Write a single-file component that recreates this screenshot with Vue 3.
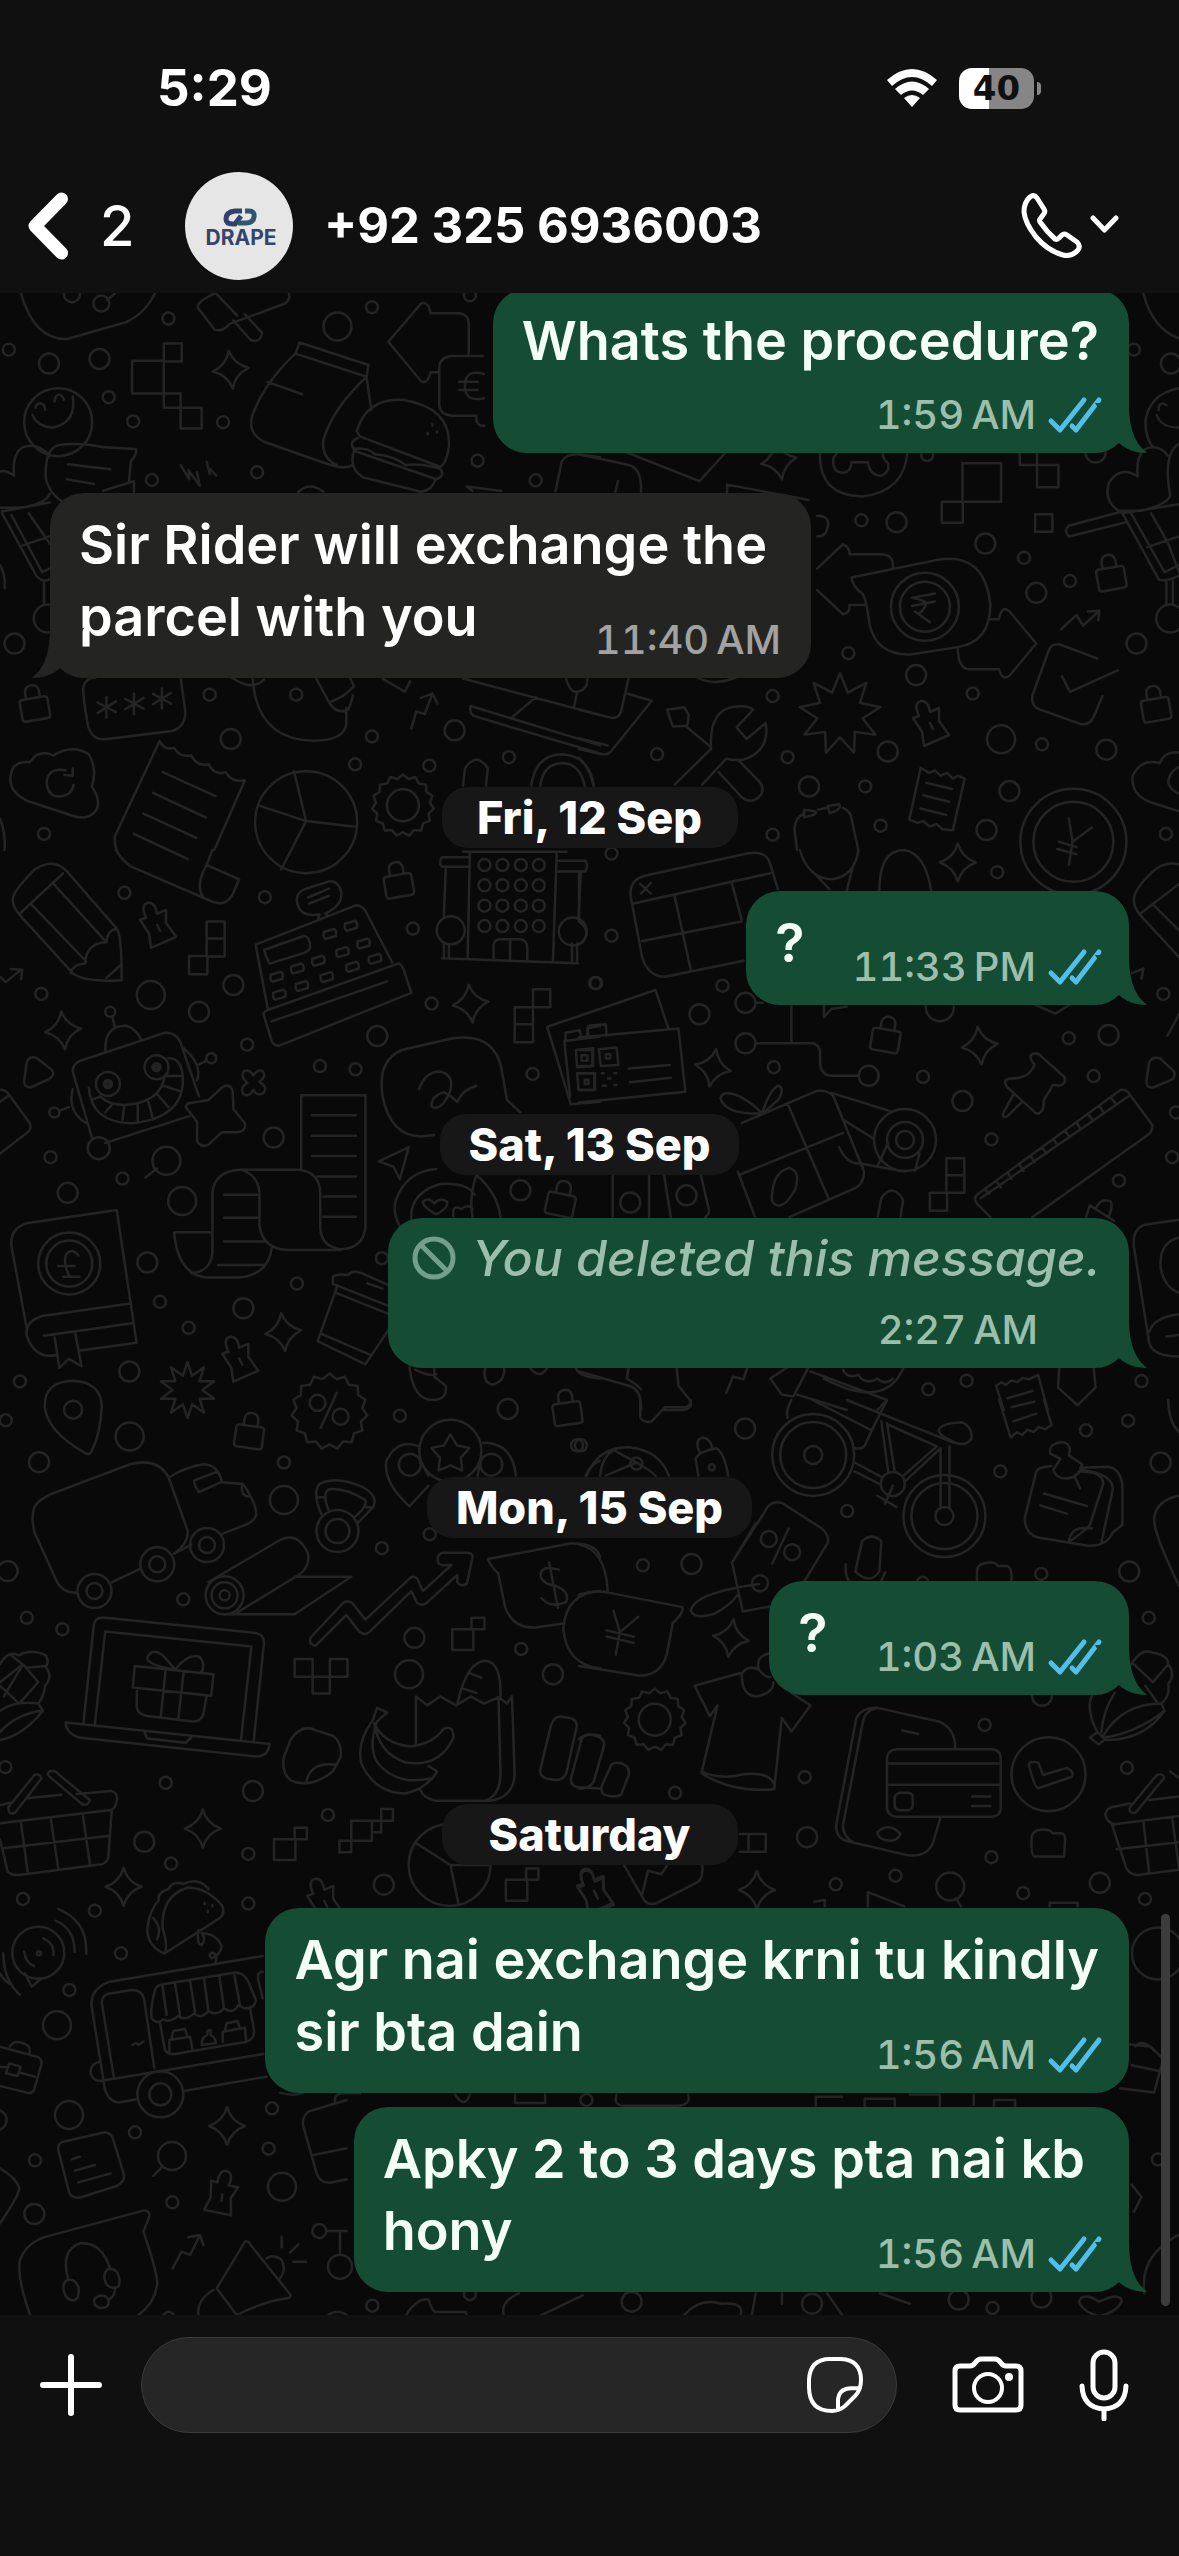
<template>
  <div class="screen">
    <header class="top">
      <div class="status">
        <span class="clock">5:29</span>
        <div class="status__right">
          <svg class="wifi" width="52" height="38" viewBox="0 0 52 38" aria-label="Wi-Fi">
            <path d="M1 11Q26-11 51 11L46 17Q26-1 6 17zM9 20Q26 5 43 20L37 26Q26 17 15 26zM18 29Q26 23 34 29L26 38z" fill="#fff" />
          </svg>
          <div class="battery"><span>40</span></div>
        </div>
      </div>
      <div class="contact">
        <button class="back" aria-label="Back">
          <svg width="40" height="68" viewBox="0 0 40 68">
            <path d="M33.500 7L7 34L33.500 61" fill="none" stroke="#fff" stroke-width="13" stroke-linecap="round" stroke-linejoin="round" />
          </svg>
          <span>2</span>
        </button>
        <svg class="avatar" width="108" height="108" viewBox="0 0 108 108">
          <circle cx="54" cy="54" r="54" fill="#e6e6e6" />
          <g fill="none" stroke-width="5">
            <path d="M57 39H50Q41 40 41 47Q41 52 48 52H50L56 44" stroke="#34406b" />
            <path d="M60 39H64Q70 39 69 45Q68 51 61 51H53" stroke="#2f5670" />
          </g>
          <text x="56" y="73" text-anchor="middle" class="avatar__name">DRAPE</text>
        </svg>
        <h1 class="phone">+92 325 6936003</h1>
        <button class="call" aria-label="Call">
          <svg width="98" height="68" viewBox="0 0 98 68" fill="none" stroke="#fff" stroke-width="5" stroke-linecap="round" stroke-linejoin="round">
            <path d="M9 5Q13 2 16 6L23 17Q25 20 22 23L19 27Q18 28 19 30Q26 40 34 47Q36 48 38 46L41 43Q43 41 46 43L56 50Q60 54 57 58Q51 65 42 63Q27 59 15 45Q4 31 3 20Q3 10 9 5z" />
            <path d="M72 26L83.500 38L95 26" />
          </svg>
        </button>
      </div>
    </header>

    <main class="chat">
      <svg class="wallpaper" viewBox="0 293 1179 2022" preserveAspectRatio="xMidYMid slice" aria-hidden="true">
        <g v-for="(tile, t) in tiles" :key="t">
          <path :d="tile.path" :transform="`translate(${tile.x} ${tile.y}) scale(${tile.sx} ${tile.sy})`" />
          <circle
            v-for="(c, i) in tile.circles"
            :key="'c' + i"
            :cx="tile.x + c[0] * tile.sx"
            :cy="tile.y + c[1] * tile.sy"
            :r="c[2]"
          />
          <path
            v-for="(s, i) in tile.stamps"
            :key="'s' + i"
            :d="shapes[s[0]]"
            :transform="`translate(${tile.x + s[1] * tile.sx} ${tile.y + s[2] * tile.sy}) rotate(${s[3] || 0})`"
          />
        </g>
      </svg>

      <div class="messages">
        <template v-for="(item, i) in items" :key="i">
          <div v-if="item.day" class="day">{{ item.day }}</div>
          <div v-else class="bubble" :class="[item.from, item.kind, { grouped: item.grouped }]">
            <div class="text">
              <svg v-if="item.kind === 'deleted'" class="ban" width="44" height="44" viewBox="0 0 44 44" fill="none" stroke="#72a08a" stroke-width="5">
                <circle cx="22" cy="22" r="19" />
                <path d="M9 9L35 35" />
              </svg>
              <p v-for="line in item.lines" :key="line">{{ line }}</p>
            </div>
            <div class="meta">
              <span>{{ item.time }}</span>
              <svg v-if="item.from === 'out'" class="ticks" width="54" height="36" viewBox="0 0 54 36">
                <g v-if="item.kind !== 'deleted'">
                  <path d="M3 24L12 33L36 3" />
                  <path d="M24 29L28 33L51 3" />
                </g>
              </svg>
            </div>
            <svg v-if="!item.grouped" class="tail" width="52" height="50" viewBox="0 0 52 50">
              <path d="M0 0H34C34 26 40 40 52 50C40 50 30 46 24 40z" />
            </svg>
          </div>
        </template>
      </div>
      <div class="scrollbar"></div>
    </main>

    <footer class="composer">
      <button class="plus" aria-label="Attach">
        <svg width="62" height="62" viewBox="0 0 62 62"><path d="M31 3V59M3 31H59" stroke-width="6" /></svg>
      </button>
      <div class="field">
        <input type="text" aria-label="Message" />
        <button class="sticker" aria-label="Stickers">
          <svg width="58" height="58" viewBox="0 0 58 58">
            <path d="M29 3H35Q55 4 55 24Q55 34 49 40L39 50Q33 55 26 55Q3 55 3 31V24Q4 3 24 3zM54 32Q44 32 40 33Q33 35 32 43V54" stroke-width="4" />
          </svg>
        </button>
      </div>
      <button class="camera" aria-label="Camera">
        <svg width="72" height="58" viewBox="0 0 72 58">
          <path d="M8 10H18Q21 10 23 7Q26 3 29 3H43Q46 3 49 7Q51 10 54 10H64Q69 10 69 15V49Q69 54 64 54H8Q3 54 3 49V15Q3 10 8 10z" stroke-width="5" />
          <circle cx="36" cy="32" r="14" stroke-width="4" />
          <circle cx="57" cy="21" r="4" fill="#fff" stroke="none" />
        </svg>
      </button>
      <button class="mic" aria-label="Voice message">
        <svg width="50" height="72" viewBox="0 0 50 72">
          <rect x="14" y="3" width="22" height="46" rx="11" stroke-width="5" />
          <path d="M3 37Q4 59 25 60Q46 59 47 37M25 60V70" stroke-width="5" />
        </svg>
      </button>
    </footer>
  </div>
</template>

<script setup>
const items = [
  { from: 'out', kind: 'stacked', lines: ['Whats the procedure?'], time: '1:59\u202fAM' },
  { from: 'in', kind: 'wrapped', lines: ['Sir Rider will exchange the', 'parcel with you'], time: '11:40\u202fAM' },
  { day: 'Fri, 12 Sep' },
  { from: 'out', kind: 'short', lines: ['?'], time: '11:33\u202fPM' },
  { day: 'Sat, 13 Sep' },
  { from: 'out', kind: 'deleted', lines: ['You deleted this message.'], time: '2:27\u202fAM' },
  { day: 'Mon, 15 Sep' },
  { from: 'out', kind: 'short', lines: ['?'], time: '1:03\u202fAM' },
  { day: 'Saturday' },
  { from: 'out', kind: 'full', lines: ['Agr nai exchange krni tu kindly', 'sir bta dain'], time: '1:56\u202fAM', grouped: true },
  { from: 'out', kind: 'wrapped', lines: ['Apky 2 to 3 days pta nai kb', 'hony'], time: '1:56\u202fAM' },
]

// closed star outline, used for gears and bursts too
const star = (points, outer, inner) => {
  const list = []
  for (let i = 0; i < points * 2; i++) {
    const r = i % 2 ? inner : outer
    const a = (Math.PI * i) / points - Math.PI / 2
    list.push(`${(r * Math.cos(a)).toFixed(1)} ${(r * Math.sin(a)).toFixed(1)}`)
  }
  return `M${list.join('L')}z`
}

const shapes = {
  sparkle: 'M0-19Q4-5 18 0Q4 5 0 19Q-4 5-18 0Q-4-5 0-19z',
  lock: 'M-11-8H11Q14-8 14-5V11Q14 14 11 14H-11Q-14 14-14 11V-5Q-14-8-11-8zM-7-8V-15Q-6-21 0-21Q6-21 7-15V-8',
  tag: 'M-18-7L-12-9Q-18-22-10-24Q-3-25-1-13L8-17L8-4L18 10L-7 21L-9 7zM-1-2L2 4',
  key: 'M-6-2L4-5Q7-4 6 2L-4 5Q-7 4-6-2z',
  clover: 'M0-7Q4-14 9-12Q14-7 6-1Q15 4 10 10Q4 14 0 7Q-4 15-10 11Q-14 5-6 0Q-14-7-9-12Q-3-14 0-7z',
  gear: star(15, 31, 27),
  badge: star(15, 38, 33),
  burst: star(9, 41, 23),
  burstSmall: star(10, 28, 15),
  star: star(5, 20, 11),
}

// doodles of the chat background, one block per area
const area = (x, y, dots, rest, path, stamps = [], sx = 0.38265, sy = 0.35714) => {
  const [small, medium, large] = dots
  const circles = [
    ...small.map(([a, b]) => [a, b, 6]),
    ...medium.map(([a, b]) => [a, b, 10]),
    ...large.map(([a, b]) => [a, b, 14]),
    ...rest,
  ]
  return { x, y, sx, sy, circles, path, stamps }
}

const windows = [1266, 1313, 1361, 1408].flatMap((x) => [42, 99, 156, 213].map((y) => [x, y, 6]))
const keys = [[723, 355], [777, 332], [832, 310], [862, 235], [917, 212], [895, 286], [950, 262], [730, 405], [789, 381], [854, 356], [921, 327], [980, 305]]
  .map(([x, y]) => ['key', x, y])

const tiles = [
  area(0, 290,
    [
      [[23, 167], [440, 80], [284, 300], [348, 368], [583, 370], [397, 532], [672, 510], [972, 48], [1228, 15], [1248, 478], [1400, 533], [548, 1133], [774, 1133], [972, 1250], [928, 1328], [1122, 1332], [1330, 1308], [115, 1523]],
      [[128, 206], [260, 193], [38, 990], [603, 1257], [1188, 1233]],
      [[882, 102], [125, 920]],
    ],
    [[152, 370, 34], [800, 1490, 51], [1053, 1443, 16], [265, 38, 8], [188, 12, 8]],
    'M783 147L963 210L958 243L772 178zM772 178Q690 260 660 350Q645 400 690 425L850 485Q900 505 922 490M958 243Q870 330 845 420Q840 470 880 490M958 243L970 335M700 258L790 292' +
    'M932 395Q960 300 1055 308Q1180 330 1173 440Q1165 490 1150 495L940 410zM935 415Q910 425 925 445Q960 440 980 460Q1030 465 1060 490Q1100 485 1150 500Q1165 520 1140 530L925 450Q910 500 950 525L1100 565Q1130 560 1138 530M1130 375V380M1118 400V404M1142 396V400' +
    'M1125 65H1200Q1225 68 1225 95V180M1125 65Q1120 30 1100 38L1015 145L1100 255Q1118 265 1125 230H1147M1262 185H1180Q1150 188 1148 215V325Q1152 350 1180 352H1245V365Q1250 382 1266 380M1265 235Q1215 220 1215 268Q1215 315 1265 303M1200 257H1248M1200 280H1248' +
    'M345 198H428V290H345zM428 150H475V200H428zM428 290V330H472V290H428M472 330H527V388H472z' +
    'M93 330Q95 315 108 318Q118 322 118 335M143 312Q145 290 158 293Q165 300 167 307M85 350Q100 385 140 385Q200 370 190 298' +
    'M130 465Q100 425 60 440Q30 460 37 520Q10 500 0 510M0 610H50Q120 600 130 570M150 435Q200 425 270 440L355 445Q360 455 342 480L337 538M150 435Q115 450 120 530Q130 570 160 590M178 488L288 502M175 530L245 543M270 562L350 535V565' +
    'M55 10Q90 140 175 137L330 90Q380 65 405 10M280 28L300 10' +
    'M517 45Q520 30 560 10M517 50L560 110Q580 120 600 95L740 40Q760 30 755 10M610 85L655 140Q680 150 685 120L640 68M565 10L620 72' +
    'M5 620L130 595M5 625L95 800Q110 820 130 810M30 630L110 790L130 780M75 625L130 710M60 715L130 690M115 815V880M0 770Q15 800 12 835' +
    'M472 490L495 530L493 505L522 548L515 510M540 480L548 515V500L565 520M780 565Q810 535 845 565M1220 550L1310 563M1220 550L1235 563M1452 563L1468 480Q1480 458 1510 460L1568 468' +
    'M218 1110Q215 1130 230 1220Q240 1260 275 1258L450 1235Q490 1220 483 1170L472 1085M218 1110Q225 1085 250 1085M278 1140V1197M255 1155L303 1182M303 1152L255 1184M350 1130V1187M327 1145L375 1172M375 1142L327 1174M423 1116V1172M400 1131L447 1158M447 1128L400 1160' +
    'M30 1350Q35 1320 78 1322Q100 1285 140 1303Q190 1270 232 1300Q255 1340 240 1390Q270 1440 245 1465Q225 1485 190 1472L70 1430Q15 1400 30 1350zM172 1345Q125 1335 122 1380Q125 1420 158 1418Q190 1412 192 1385M168 1358L190 1360V1340' +
    'M417 1263L300 1530Q298 1550 305 1568M417 1263Q430 1290 455 1282Q470 1310 500 1303Q515 1335 545 1328Q560 1360 590 1350Q605 1380 640 1373L560 1568M425 1350L563 1417M400 1408L538 1477M375 1466L513 1534M350 1523L440 1568' +
    'M768 1347L800 1487L928 1503M675 1443L800 1487L735 1622' +
    'M660 1085Q670 1260 820 1262Q900 1262 905 1215V1170M825 1085L860 1155Q900 1140 925 1110L915 1085M860 1155Q880 1190 910 1175Q920 1150 922 1135M605 1085Q660 1125 690 1090' +
    'M1075 1228L1088 1180L1110 1188L1130 1130M1100 1142L1130 1130L1143 1158' +
    'M1210 1088L1568 1190M1230 1165L1568 1275M1230 1165Q1225 1190 1245 1195L1568 1298M1340 1195L1400 1140M1480 1090Q1490 1130 1510 1125Q1535 1120 1535 1090M1508 1128L1500 1168M1000 1088L1058 1125L1072 1095' +
    'M1210 1388L1215 1340Q1245 1290 1275 1340L1270 1388M1388 1388Q1400 1300 1470 1300Q1540 1305 1552 1388M1412 1388Q1420 1325 1470 1325Q1515 1325 1528 1388M0 1480Q15 1520 12 1568',
    [['sparkle', 603, 223, -6], ['lock', 90, 1165, -10], ['gear', 1053, 1443]]
  ),
  area(579, 290,
    [
      [[1450, 167], [910, 462], [738, 645], [1163, 750], [1283, 815], [704, 1017], [1029, 1130], [506, 1137], [204, 1300], [545, 1308], [748, 1390], [788, 1500], [506, 1525], [1210, 1272], [1534, 1523]],
      [[1547, 206], [830, 650], [1062, 710], [1195, 848], [1457, 990], [881, 1078], [807, 1292], [601, 1390], [1378, 1287], [1125, 1403], [1065, 1512], [1350, 455]],
      [[1103, 1258], [1545, 920]],
    ],
    [[904, 887, 34], [904, 887, 25], [1292, 1545, 53], [1292, 1545, 40]],
    'M1475 10Q1500 110 1568 135M630 455Q625 575 740 578Q850 565 858 455M665 470Q660 510 690 512Q712 508 712 482H755Q760 520 790 520Q812 510 808 485Q790 470 795 455M665 470L675 455' +
    'M1002 485H1103V593H1002zM948 593H1003V652H948zM1152 455V490H1197V455M1197 490H1253V552H1197zM1192 628H1237V677H1192z' +
    'M0 460L130 490Q165 500 162 565M125 455L315 535L383 455M387 570V545L600 588M95 565L102 535M622 632Q660 632 648 670Q645 690 622 690' +
    'M1280 660Q1350 640 1420 620M1280 690L1430 650M1280 660Q1265 675 1280 690M1420 625L1515 810Q1530 820 1568 800M1440 620L1530 790L1568 770M1495 625L1540 710L1568 790M1485 720L1568 690M1420 625L1568 600M1535 815V880M1552 815V880' +
    'M1540 465Q1515 430 1480 445Q1455 465 1460 522Q1415 490 1385 540Q1370 590 1410 618H1470Q1540 600 1545 575M1568 430Q1525 460 1545 575M1568 275Q1490 290 1480 370Q1482 420 1500 440M1515 335Q1515 310 1535 322M1510 350Q1520 385 1568 385' +
    'M622 780L690 712Q708 720 707 740H790Q825 742 820 780M622 840L690 908Q708 905 707 882H745M712 805L940 755Q1060 735 1075 880Q1075 985 990 1000L870 1020Q780 1025 760 940Q750 860 740 850Q715 830 712 805zM870 862L930 850M870 885L930 872M870 862Q915 870 905 885Q890 915 878 900L917 930' +
    'M1075 922H1097Q1105 880 1125 900L1195 990L1125 1080Q1105 1095 1098 1062H1020Q990 1060 990 1000M1260 950L1300 910L1317 940L1360 898M1330 900L1360 898L1357 925' +
    'M1355 1032L1255 992Q1235 990 1228 1008L1185 1135Q1180 1165 1205 1175L1310 1215Q1335 1220 1345 1195L1368 1137M1262 1082L1283 1125L1408 1065' +
    'M250 1385L345 1285Q340 1180 400 1168Q440 1160 455 1175L412 1225L438 1257L488 1212Q500 1290 430 1315Q400 1318 385 1312L322 1385M230 1175L275 1168L287 1190L283 1220L245 1222zM283 1225L345 1280M365 1350L425 1420Q450 1440 470 1420Q490 1400 470 1375L415 1315' +
    'M0 1175L85 1198Q105 1200 110 1180L130 1085M125 1130L190 1150L85 1290Q75 1305 50 1298L0 1285M0 1255L75 1275M0 1310Q30 1340 38 1388M310 1085Q350 1110 410 1085' +
    'M893 1338L915 1352L930 1345L945 1360L962 1352L977 1368L990 1360L1008 1368M863 1483L893 1338M1008 1368L977 1513M863 1483L885 1492L900 1487L915 1502L935 1496L950 1510L977 1513M908 1380L975 1397M900 1415L967 1433M892 1452L960 1470' +
    'M1280 1480L1290 1545L1340 1505M1290 1545L1280 1610M1255 1545L1300 1560M1250 1565L1300 1580' +
    'M570 1568L563 1510Q565 1475 590 1465M625 1455L650 1450M690 1450Q710 1460 712 1480L730 1568M588 1455L618 1460Q625 1470 588 1476zM650 1445L680 1440Q688 1455 655 1465z' +
    'M1568 1295Q1530 1290 1518 1325Q1470 1310 1447 1360Q1440 1420 1510 1440L1568 1460M1568 1335Q1540 1350 1540 1380Q1545 1400 1568 1410',
    [['sparkle', 522, 478, -10], ['lock', 1390, 800, -10], ['lock', 1507, 1167, -10], ['burst', 682, 1188], ['tag', 920, 1218]]
  ),
  area(0, 850,
    [
      [[325, 120], [108, 403], [646, 545], [692, 132], [1079, 220], [1128, 430], [1555, 373], [836, 605], [929, 614], [1392, 627], [132, 860], [320, 920], [418, 1265], [493, 1338], [776, 1214], [998, 1143], [52, 1488]],
      [[520, 453], [610, 378], [986, 521], [715, 805], [177, 960], [385, 1155], [636, 1283], [338, 1460], [1360, 953]],
      [[394, 406], [476, 983], [435, 870], [1178, 225], [1497, 228]],
    ],
    [[288, 453, 5], [142, 735, 5], [552, 583, 5], [258, 835, 11], [282, 655, 12], [409, 608, 12], [282, 655, 4], [409, 608, 4], [282, 655, 2], [409, 608, 2], [181, 1158, 31], [181, 1158, 23], ...windows],
    'M35 130Q40 110 90 55Q140 20 175 60L305 220Q318 235 318 365Q220 370 190 345L50 180Q28 150 35 130zM50 180L165 65M82 152L225 312M140 95L278 258M278 258Q225 260 222 318Q190 320 185 345M278 258Q280 225 305 220M278 358L318 320' +
    'M303 0Q320 30 340 45L545 140Q590 165 610 120L625 82L540 42Q510 100 530 130M555 0L540 42M440 0L490 25M0 355L15 370L55 335M28 333L58 335L55 362' +
    'M668 265L930 155Q945 155 955 170L1025 315M668 265L700 445M690 465Q685 455 700 448L1040 318Q1050 320 1055 335L1075 400L730 548Q718 550 710 535zM710 480L1012 368M690 280L795 240Q812 245 810 275Q805 285 795 288L705 318Q695 300 690 280zM832 190L835 180Q785 190 777 150Q770 120 800 108L860 88Q885 85 892 120Q895 155 850 178L858 185M805 133L860 108M808 150L860 128' +
    'M1228 5L1222 303M1455 10L1445 310M1155 303L1510 317M1228 20H1155Q1145 35 1155 47H1228M1455 30H1530Q1538 45 1530 60H1455M1165 47L1160 185M1518 60L1512 190M1160 262V303M1173 265V303M1495 262V317M1508 262V317M1290 305V265Q1292 250 1310 250H1360Q1378 252 1378 275V305M1333 250V305M1210 5H1480' +
    'M540 200H587V298H540zM540 248H587M494 297H542V348H494zM1393 390H1438V440H1393zM1345 440H1393V538H1345zM1345 488H1393' +
    'M190 620Q190 600 210 590L430 512Q465 510 475 550L520 690M190 620L240 805M275 820L495 745M300 495L293 465M275 560Q275 490 330 492Q355 500 368 528M232 665Q240 765 345 765Q480 750 478 640Q475 580 440 583M262 690Q290 720 345 712Q420 700 430 635M275 735L295 710M320 755L325 715M360 762V715M400 755L388 705M440 720L412 685M470 675L428 660M478 633H432M240 700L262 690M190 670Q175 730 225 765M480 555Q530 600 515 645M155 730L180 720M520 600L540 590' +
    'M490 710L545 700L580 665Q600 650 608 675L610 725L640 765Q645 790 615 790H580L545 825Q525 835 515 815V760L485 720zM70 595Q75 575 95 582L135 615Q145 630 130 640L80 665Q62 665 63 645zM0 672Q10 668 20 680L78 765Q82 778 75 788L0 850M0 705L22 688M410 892L380 917' +
    'M787 895V687H955V1055Q950 1115 890 1118Q840 1110 837 1060V960Q835 900 780 895H625Q560 900 555 960V1130Q550 1180 500 1185M630 895Q675 910 678 960V1050Q685 1115 750 1120H890M555 1070H455Q465 1190 540 1197H625Q700 1190 710 1115M815 743H930M815 800H930M815 857H930M830 914H930M845 970H930M845 1027H930M585 965H678M585 1030H678M585 1096H690M570 1162H690' +
    'M1000 690Q985 590 1050 560L1180 528Q1290 510 1310 610L1325 700L1360 735M1000 690Q1020 800 1100 802L1135 798M1095 670Q1110 620 1150 620Q1190 630 1175 680Q1150 735 1128 718Q1125 690 1160 678Q1180 690 1195 705Q1210 670 1245 660M990 872L1068 832L1045 922L1028 887z' +
    'M1430 495L1568 445M1430 495L1492 712L1568 705M1475 540L1490 690M1475 535L1568 522M1478 530V512L1515 505L1520 525M1538 522L1535 500L1568 492M1505 560L1550 555V605L1508 608zM1520 575H1535V590H1520zM1508 625H1555V672H1512zM1528 643H1538V655H1528z' +
    'M1065 1090Q1020 1020 1035 980Q1060 900 1140 893M1075 1035Q1070 960 1150 935Q1220 930 1240 965M1245 910Q1300 960 1308 1028M1235 1028Q1225 970 1245 910M1140 1020Q1105 1000 1105 985Q1120 970 1135 990Q1150 970 1168 985Q1175 1000 1140 1020M1185 1028Q1180 990 1205 1005Q1225 990 1235 1005' +
    'M70 1340L30 1110Q25 1060 70 1045L305 1008L357 1380L205 1402M145 1415Q90 1425 70 1360Q65 1320 110 1305L340 1270M115 1360L345 1325M143 1365L155 1450L180 1425L213 1445L197 1355M205 1135Q185 1110 172 1135Q165 1160 182 1195H208M165 1195H182M152 1165H195' +
    'M870 1195Q880 1185 910 1190Q920 1175 945 1185L1040 1230M870 1195V1215L1035 1285M880 1225L830 1375L955 1440L1030 1320M878 1240L1030 1305M840 1355L965 1412M960 1213L1000 1228' +
    'M1070 1448Q1080 1540 1130 1540Q1170 1540 1165 1500L1135 1475V1448M1085 1455Q1120 1475 1140 1468M1268 1448Q1260 1490 1285 1497Q1320 1490 1318 1448M1385 1450Q1410 1485 1430 1450M1505 1450Q1510 1475 1568 1480',
    [['sparkle', 165, 505, -6], ['sparkle', 1230, 430, -6], ['sparkle', 740, 1350, -6], ['tag', 413, 215], ['tag', 628, 1430], ['lock', 1041, 92, -10], ['lock', 1466, 985, 12], ['clover', 662, 652], ['burstSmall', 490, 1512], ...keys]
  ),
  area(579, 850,
    [
      [[85, 10], [85, 240], [45, 373], [375, 380], [509, 608], [899, 635], [1093, 62], [1280, 527], [1345, 633], [1527, 403], [1078, 810], [1411, 926], [1550, 860], [913, 1510], [1013, 1486], [1470, 1487], [1560, 735]],
      [[315, 460], [435, 428], [435, 541], [757, 632], [1384, 518], [1002, 703], [134, 987], [281, 967]],
      [[943, 440]],
    ],
    [[852, 812, 31], [852, 812, 18], [852, 812, 9]],
    'M135 130Q130 80 180 70L440 10Q490 0 500 40L520 110M135 130L165 300Q180 355 225 355L430 310M143 150L500 65M250 130L292 335M400 95L425 195M165 255L425 200M160 95L188 122M188 92L162 122' +
    'M577 0Q600 80 660 82Q720 75 730 0M610 60L655 110M715 50L700 112M785 112Q785 0 850 0Q905 10 920 112M0 65V200Q25 220 18 240Q12 260 0 265' +
    'M1568 40Q1530 30 1500 60Q1450 110 1450 140Q1450 160 1465 180L1568 300M1465 180L1568 95M1500 152L1568 225M1445 345L1475 332L1470 360' +
    'M0 465L200 392L233 498M0 525L260 500L278 677L0 707M0 560H35V605H0M52 558L98 553L103 602L57 605zM70 572H82V584H70zM0 625H40V672H0M60 625H65M92 625H98M75 640H82M62 660H70M92 658H98M130 612L237 602M133 650L240 638M20 520L25 492L70 488L72 520' +
    'M460 428H480M555 432V541M460 541H610Q630 545 630 570V600Q635 632 660 632H730M640 435V468L660 445L700 438M1190 432L1245 458L1285 432' +
    'M1180 575Q1195 562 1210 580L1268 635Q1275 655 1255 660Q1235 655 1235 665L1215 700Q1215 740 1195 738L1120 665Q1105 645 1125 640Q1180 640 1190 600Q1180 590 1180 575zM1135 685L1108 738Q1105 752 1120 745L1158 705' +
    'M425 765L620 675Q650 670 665 690L745 900Q745 930 725 945L550 1028M545 710L653 978M418 910L690 792M415 900L460 1028M475 738Q380 740 370 695Q375 670 420 690Q455 710 478 738Q500 670 520 660Q540 665 520 700L480 738M505 960Q510 900 550 890Q580 900 565 950Q540 1000 518 995Q500 990 505 960z' +
    'M660 680L815 732M690 755L770 808M680 832Q700 880 735 878L850 900M808 820L780 885M890 850L878 898' +
    'M1040 965L1415 672Q1430 668 1440 685L1498 770Q1500 785 1490 795L1185 1028M1040 965Q1030 975 1040 990L1075 1028M1050 975L1435 690M1060 950L1072 962M1090 927L1102 945M1120 903L1130 920M1150 880L1162 898M1180 857L1190 874M1210 833L1222 850M1240 810L1250 826M1270 787L1282 803M1300 763L1310 780M1330 740L1342 756M1360 716L1370 733M1390 693L1402 710' +
    'M960 863H1007V960H960zM960 911H1007M917 960H962V1010H917zM780 1028L790 975Q820 930 847 980L840 1028M1325 1028L1335 995L1398 1038M1350 1005Q1365 970 1390 985Q1395 1000 1385 1025' +
    'M1490 595Q1500 575 1520 585L1555 620Q1560 640 1545 645L1500 665Q1482 668 1483 645zM1568 1035L1475 1050Q1445 1065 1450 1110L1490 1380Q1500 1418 1568 1418M1490 1350Q1500 1310 1568 1300M1568 1085Q1515 1100 1520 1170Q1530 1225 1568 1240M1535 1362L1568 1358M1538 520L1568 460' +
    'M88 908V1028M183 908V1028M222 908L240 1028M318 908L340 1010Q340 1020 330 1028' +
    'M0 1460L130 1500Q165 1510 162 1568M130 1448L125 1480Q150 1495 162 1510M255 1448L260 1500L290 1540Q300 1565 270 1568H220M385 1520L402 1475L430 1482L440 1448M500 1480L530 1525L560 1530L600 1448M500 1480L545 1448M605 1460L805 1540L780 1568M570 1525L700 1568' +
    'M1090 1500L1105 1490L1115 1498L1130 1485L1145 1490L1160 1478L1175 1482L1200 1470L1225 1568M1090 1500L1110 1568M1120 1535L1185 1515M1255 1448L1252 1505L1303 1555L1350 1505L1345 1448M640 1480Q800 1570 848 1450M690 1455Q700 1480 730 1470Q750 1500 780 1480Q800 1500 820 1480',
    [['sparkle', 990, 35], ['sparkle', 350, 610, 10], ['sparkle', 1047, 548, -6], ['lock', 802, 525, 10]]
  ),
  area(0, 1400,
    [
      [[15, 57], [1045, 44], [742, 175], [1508, 127], [1123, 376], [998, 415], [479, 558], [70, 610], [163, 642], [1362, 697], [14, 1028], [433, 1072], [857, 1162], [649, 1271], [447, 1298], [60, 1397], [649, 1410], [248, 1430]],
      [[102, 174], [1327, 25], [20, 479], [1083, 666], [1445, 768], [661, 1095], [377, 1237], [1003, 1357]],
      [[339, 102], [742, 280], [1069, 768]],
    ],
    [[191, 27, 9], [830, 8, 8], [890, 47, 8], [247, 535, 17], [247, 535, 8], [411, 460, 17], [411, 460, 8], [541, 406, 17], [541, 406, 8], [882, 367, 21], [882, 367, 12], [1177, 142, 31], [1071, 181, 11], [1284, 181, 11], [587, 547, 19], [587, 547, 13], [587, 547, 5], [1175, 1302, 41], [100, 1548, 26]],
    'M117 20Q115 -52 191 -54Q265 -50 266 20Q262 100 237 148Q232 155 222 148Q125 90 117 20zM880 -20L838 78' +
    'M90 300Q100 280 130 265L340 180Q410 160 440 215L490 365Q495 400 455 430M90 300Q80 330 90 370L145 500Q160 540 200 540M293 510L367 472M445 215Q480 190 530 180Q570 180 580 230L635 235Q670 290 670 320Q665 340 640 350L580 375M578 230L520 258Q505 235 508 225L570 200M455 430L500 405M632 240Q630 270 650 270' +
    'M840 320Q815 260 835 235Q880 210 950 245Q990 270 975 300L935 345M860 312Q840 260 860 250Q900 245 955 280Q960 300 925 330M830 272H848M958 300H975' +
    'M1095 130Q1040 105 1010 170Q1000 230 1070 298L1120 240M1262 120Q1340 120 1348 212M1100 175L1120 212M1255 175L1248 212M1530 212Q1545 180 1568 170' +
    'M545 510L735 390Q780 370 805 430Q810 470 780 490L620 595M770 495H918L770 600H585' +
    'M245 630Q250 605 275 610L665 652Q690 655 690 680L663 955M245 630L218 905M275 648L657 690L630 950M275 648L248 908M172 903L705 963Q700 1000 670 998L205 945Q170 930 172 903zM378 932L385 948L485 960L500 945M352 745L558 768L552 828L347 805zM433 755L420 888M480 762L466 893M358 808L357 860Q360 880 385 885L505 900Q530 900 533 870L540 828M455 755Q380 740 385 720Q400 690 430 720L458 755Q490 710 520 718Q540 740 525 765' +
    'M812 665Q805 685 825 688L905 602L940 650Q955 660 965 650L1075 535L1090 568Q1105 578 1115 568L1195 490V510Q1205 525 1220 515L1235 440Q1235 428 1220 428H1155Q1140 435 1145 455Q1150 465 1170 462H1180L1105 535L1090 500Q1080 490 1070 500L955 615L920 568Q905 560 895 570z' +
    'M1275 445L1490 402Q1560 400 1568 440M1275 445Q1285 470 1302 485L1320 580Q1340 640 1400 637L1475 625M1460 475Q1410 460 1413 495Q1420 515 1450 520Q1490 535 1480 565Q1440 585 1415 555M1435 455L1458 582M1568 535Q1480 540 1472 640Q1480 740 1568 752' +
    'M770 725H817V775H770zM862 725H908V775H862zM817 775H862V822H817zM1232 610H1266V642H1232zM1182 642H1237V700H1182zM770 1198H802V1230H770zM716 1230H772V1288H716zM996 1145H1027V1178H996zM972 1178H996V1210H972zM918 1178H972V1234H918zM887 1234H918V1266H887zM1375 1312H1407V1343H1375zM1322 1343H1378V1402H1322z' +
    'M760 950Q790 905 825 925L870 940Q895 960 890 1000L870 1040Q810 1090 760 1065Q735 1045 742 1000zM800 1073Q810 1010 880 1022' +
    'M975 895Q930 960 945 1020Q980 1100 1060 1102Q1110 1090 1140 1045M985 900Q960 980 990 1020Q1040 1080 1125 1060M978 905Q1000 960 1070 970Q1130 965 1160 920Q1185 910 1185 945Q1150 1030 1060 1015Q990 990 978 905M975 895L985 862L1012 875L985 900M1120 1025L1142 1040L1130 1060' +
    'M1087 965V830L1117 855L1150 830L1192 855L1230 830L1265 850L1303 832L1325 850L1338 830L1345 1050Q1340 1115 1280 1122H1140Q1105 1115 1098 1090M1303 832L1308 1050Q1305 1110 1270 1120M1195 852Q1220 730 1270 730Q1310 735 1308 830M1228 765L1258 778M1210 808L1245 820' +
    'M1440 910Q1450 880 1475 888Q1510 890 1507 915L1480 1045Q1470 1070 1440 1062Q1410 1060 1412 1035zM1568 940Q1530 930 1520 950L1492 1060Q1490 1085 1520 1085L1568 1088' +
    'M0 1135L25 1128M70 1115L160 1105M200 1103L290 1095Q310 1100 305 1125Q300 1145 290 1148L0 1185M0 1230L20 1320Q30 1332 50 1330L265 1300Q280 1295 283 1280L292 1150M55 1185L72 1320M133 1175L152 1310M217 1165L235 1300M10 1255L285 1220M22 1140L90 1050Q105 1045 108 1060L40 1155Q20 1165 22 1140M130 1040Q145 1035 155 1050L235 1120Q230 1138 215 1132L130 1055Q120 1045 130 1040' +
    'M0 740Q20 700 50 715Q80 695 120 715Q130 740 118 745Q140 775 118 800Q115 830 100 850L112 870Q60 940 0 952M0 930Q40 880 110 870M100 850Q40 840 0 870M0 790L60 740L100 790L50 850L0 800M30 715L70 750L120 745M60 740L10 830' +
    'M430 1550L575 1450Q590 1435 580 1415Q540 1365 490 1365Q420 1390 425 1480Q440 1530 430 1550Q385 1530 385 1480Q390 1430 415 1400Q410 1380 440 1370Q450 1345 480 1355Q520 1335 545 1370M400 1450Q425 1480 410 1510M535 1408V1412M555 1414V1418M543 1430V1434' +
    'M1177 1302L1090 1243M1177 1302L1198 1410M1177 1302H1280M152 1425Q230 1460 225 1550M145 1458Q195 1480 195 1545',
    [['badge', 861, 32], ['lock', 652, 95, 8], ['lock', 1482, 30, -8], ['star', 1177, 152], ['sparkle', 530, 1200], ['sparkle', 323, 1363], ['tag', 850, 1408], ['tag', 1557, 1385]]
  ),
  area(579, 1400,
    [
      [[5, 127], [1435, 58], [1325, 85], [1101, 200], [701, 311], [167, 463], [1208, 487], [1489, 610], [1060, 910], [1432, 1030], [590, 1056], [251, 1100], [1078, 1280], [827, 1332], [671, 1356], [1161, 1381], [1479, 1397], [898, 512]],
      [[434, 80], [1520, 175], [294, 459], [1438, 480], [596, 1224], [1361, 1352], [1210, 828]],
      [[970, 1362]],
    ],
    [[612, 154, 41], [612, 154, 33], [612, 154, 9], [955, 325, 41], [955, 325, 33], [955, 325, 9], [820, 235, 12], [150, 178, 6], [347, 188, 3], [496, 389, 8], [557, 426, 8], [473, 513, 8], [198, 895, 16], [1227, 1048, 37]],
    'M545 50Q540 30 555 0M610 0L765 85M765 85L805 0M720 135Q745 140 750 120L765 85M790 60L808 200M805 65L825 200M700 0L980 120M810 70L935 130L850 210M945 135L850 230M945 140V300M968 130V300M720 175L790 215M720 200L785 235M940 85Q945 65 1000 62Q1030 75 1025 110Q1010 130 985 120Q940 100 940 85M820 240L800 290M780 268L830 300' +
    'M20 212Q50 130 130 132Q210 140 235 212M55 212Q60 160 90 140M70 212L150 175Q190 200 200 212M150 175L90 140M312 212L305 165Q310 145 360 135Q380 150 390 212M315 145Q300 110 325 105Q345 110 348 135M160 0V50Q170 65 190 60L225 20H280Q295 10 292 0' +
    'M462 345L400 455L428 592L500 578M400 455L487 310Q500 280 530 288L635 360Q655 380 650 400L590 506M548 360L505 458M470 515Q300 540 292 590Q300 615 350 600Q390 580 415 545' +
    'M0 545Q40 530 80 540L270 580Q275 595 245 625L230 710Q215 770 160 772L0 745M0 405Q70 420 75 535M90 590L107 650L155 607M107 650L96 713M72 645L143 663M72 662L143 680' +
    'M740 395Q765 370 790 395L785 480Q760 520 722 480zM697 460Q695 490 705 506M800 483L790 506' +
    'M1195 200L1165 330Q1165 375 1200 385L1330 408Q1380 410 1395 370L1420 350V240Q1415 190 1380 187L1310 190M1195 200Q1200 188 1235 185M1310 200Q1370 200 1370 235L1335 350Q1330 360 1280 398M1280 398Q1285 350 1340 360M1310 195Q1395 205 1395 250L1365 400M1215 262L1327 297M1205 295L1275 318M1232 150Q1225 120 1265 118Q1290 125 1280 155L1315 180Q1310 215 1275 220Q1245 220 1240 195L1258 165zM1295 215L1310 248' +
    'M1040 505V475Q1045 455 1075 455Q1090 455 1095 465H1120Q1132 470 1130 505M1183 1225Q1185 1205 1205 1203Q1230 1200 1238 1213H1260Q1272 1215 1270 1235L1268 1278H1190Q1180 1275 1183 1225z' +
    'M1098 0L1128 105L1145 90L1158 98L1172 83L1188 90L1202 75L1218 82L1235 70L1215 0M1130 20L1190 5M1135 60L1195 38M1568 268Q1510 280 1503 330Q1500 370 1568 520M1540 0Q1540 60 1568 90' +
    'M302 800L420 765M302 800L342 885L362 855L320 1045Q400 1100 510 1090L530 890L555 928L605 855L555 820M320 1040Q370 1065 430 1048Q500 1040 512 1080M425 765Q425 830 465 830Q510 820 508 790M427 765Q440 740 470 755Q460 720 495 710M470 755Q490 780 500 775' +
    'M0 950Q15 935 35 938Q70 945 65 970L38 1070Q25 1090 0 1088M85 1020Q100 1010 125 1025Q132 1035 130 1050L110 1105Q95 1115 65 1105Q55 1095 60 1080z' +
    'M672 1190L725 890Q740 860 780 862L940 900Q985 920 983 978M672 1190Q670 1225 700 1235L860 1275Q910 1280 925 1240L945 1168M775 864Q748 870 742 900L690 1190Q690 1225 720 1240M845 925L887 935M780 1210Q810 1180 840 1215Q830 1240 800 1232Q780 1225 780 1210' +
    'M805 1000Q808 980 830 978H1080Q1100 980 1102 1000V1145Q1100 1165 1080 1167H830Q808 1165 805 1145zM805 1018H1102M805 1077H1102M1027 1110H1075M1027 1137H1075M838 1100H860Q872 1102 872 1112V1135Q870 1147 860 1149H838Q825 1147 825 1135V1112Q828 1102 838 1100' +
    'M1175 1020Q1180 1010 1200 1015L1213 1050L1275 1030Q1295 1040 1288 1055L1200 1087Q1190 1085 1175 1020z' +
    'M1437 750Q1470 690 1500 708Q1540 715 1540 740Q1560 770 1540 795Q1545 830 1522 850L1530 870Q1480 950 1380 952M1370 940Q1420 850 1522 850M1375 945Q1460 930 1530 870M1335 945L1355 930L1375 950L1358 965zM1355 930Q1320 860 1345 820M1365 930Q1370 870 1400 820M1450 740L1500 790L1540 740M1480 800L1510 845' +
    'M1375 1160Q1380 1140 1400 1138L1440 1130M1490 1120L1568 1110M1375 1160Q1380 1185 1400 1188L1568 1165M1393 1190L1430 1310Q1440 1330 1460 1330L1568 1315M1475 1180L1490 1325M1550 1168L1568 1310M1405 1258L1568 1238M1440 1140L1510 1050Q1530 1045 1528 1060L1455 1155Q1435 1160 1440 1140M1545 1040L1568 1058' +
    'M420 1215H488V1265H420M443 1215V1265M118 1303L170 1400Q180 1415 200 1410L310 1350Q325 1340 322 1303M165 1385L180 1318L215 1328L230 1303M755 1418V1378L850 1418M985 1395L998 1418M1230 1418V1408H1303V1418M615 1405L642 1400V1418',
    [['sparkle', 397, 667, 8], ['sparkle', 465, 1372], ['gear', 198, 895], ['tag', 42, 1380]]
  ),
  area(0, 1930,
    [
      [[363, 70], [208, 180], [405, 607], [105, 691], [816, 535], [806, 656], [517, 817], [1117, 1127]],
      [[103, 852]],
      [[171, 286], [207, 555], [516, 678], [846, 770]],
    ],
    [[958, 903, 7], [1020, 1010, 12], [481, 493, 23], [481, 493, 11], [117, 70, 2], [-10, 570, 10]],
    'M75 130L95 170L125 145M10 70Q10 150 60 195M0 130Q15 155 35 165M72 65Q78 100 102 108M130 25Q165 40 160 75' +
    'M788 78L330 155Q270 175 275 230L315 480Q330 520 360 517L410 508M555 482L800 440M790 372L305 452M305 215Q310 190 335 190L395 180Q425 180 432 205L463 415M305 215L342 445M300 395Q270 400 272 430Q280 455 305 452M398 345Q410 335 415 345L430 335M788 125Q770 125 775 150L788 205' +
    'M465 180Q470 165 490 163L700 128Q730 125 745 155L768 210Q765 235 735 235Q720 230 715 225Q700 255 672 235Q650 260 625 243Q605 270 582 250Q555 275 535 258Q505 280 490 268Q470 285 455 265Q450 235 465 180zM487 165L500 255M525 160L540 255M570 152L585 245M612 146L625 240M658 138L672 235M702 130L720 225M480 280L495 360Q505 375 525 372L740 335Q765 325 762 300L750 235' +
    'M508 365V330L570 320L578 360M515 325L520 303L555 297L562 320M605 345Q605 320 622 315V303L632 300V315Q645 320 648 340zM668 335V305L735 293L738 330M675 300L680 280L712 273L720 295M595 0Q590 45 605 45Q620 30 605 10Q650 10 665 50Q660 75 635 85Q620 70 640 68Q655 80 645 100' +
    'M0 350L110 380Q125 385 125 400L102 480Q95 492 80 488L0 468M0 410L20 412M60 428L105 440M28 400L62 410L53 438L18 430zM30 350Q40 330 65 338Q95 345 88 370' +
    'M175 660Q172 640 190 635L315 607Q335 610 340 630L372 735Q375 755 350 768L240 803Q215 805 208 790zM215 688L240 680M225 722L285 705M235 757L332 730M485 712L460 738' +
    'M1040 510L925 545Q905 560 910 590L950 730Q960 760 990 758L1040 748M940 675L1040 655M1005 520V505Q1010 490 1030 490H1080M0 715Q50 745 58 775Q55 800 0 880M840 488Q880 500 910 488' +
    'M90 1155Q50 1040 60 990Q75 945 130 922L430 842Q450 840 448 860L430 905Q470 1020 472 1060Q465 1120 415 1155M205 1050Q180 960 240 940Q305 935 330 1015M205 1050Q185 1055 192 1085Q200 1115 225 1110Q240 1100 235 1070Q225 1045 205 1050M325 1017Q305 1030 318 1060Q330 1080 355 1070Q365 1050 350 1025Q340 1015 325 1017M345 1075Q345 1100 325 1110Q320 1095 300 1097Q275 1105 285 1125Q300 1140 320 1130Q330 1120 325 1110' +
    'M518 1015L545 965L570 975L600 915M565 922L600 915L610 945M650 1075L735 935Q745 930 752 945L872 1095Q870 1105 860 1105Q790 1115 710 1155M595 1155Q590 1110 640 1080M650 1075L710 1155M800 985Q820 970 845 990Q860 1020 840 1045M845 920V952M895 943L870 968M880 995H918M980 903H1040M1020 905V975M490 1155Q505 1135 522 1155M985 1155Q1010 1135 1040 1155',
    [['sparkle', 681, 588], ['tag', 666, 800, 35]],
    1 / 3, 1 / 3
  ),
  area(0, 1900,
    [
      [[1320, 975], [1540, 620], [625, 942], [780, 478]],
      [[1275, 955], [1385, 950], [840, 960], [1080, 965]],
      [],
    ],
    [[1540, 128, 26]],
    'M540 992Q555 950 570 955Q575 985 580 985H620V992M670 992Q665 960 690 940M720 992L775 945M910 992Q930 950 960 965Q990 960 985 992M1005 940L1000 992M1040 940V965M1100 940L1120 992M1170 940L1210 965M1435 960Q1440 935 1462 960Q1490 935 1492 960Q1485 985 1462 995Q1440 985 1435 960z' +
    'M1500 345L1530 350L1547 380L1535 460L1490 450M1505 395L1545 410M1510 350Q1520 330 1535 360M1505 680L1518 710L1508 745M1522 940Q1515 850 1568 800' +
    'M685 465V485H725V465M820 465Q815 490 830 492H900Q920 490 915 465M1085 492V470H1120M1150 492V475H1190V492M1210 465H1250V492M1295 465V490M1322 492V478H1350V492M605 465Q618 500 625 465',
    [],
    0.7519, 0.4184
  ),
]
</script>

<style>
body {
  background: #101010;
}
</style>

<style scoped>
.screen {
  display: flex;
  flex-direction: column;
  height: 100vh;
  overflow: hidden;
  background: #101010;
  color: #fff;
  font-family: Inter, "Liberation Sans", sans-serif;
}
button {
  padding: 0;
  border: 0;
  background: none;
  color: inherit;
  font: inherit;
  cursor: pointer;
}
svg {
  display: block;
  flex: none;
}
.top {
  padding-top: 60px;
}
.status {
  display: flex;
  align-items: center;
  justify-content: space-between;
  height: 56px;
  padding: 0 138px 0 157px;
}
.clock {
  font-size: 51px;
  font-weight: 700;
  line-height: 56px;
}
.status__right {
  display: flex;
  align-items: center;
  gap: 21px;
}
.battery {
  position: relative;
  width: 75px;
  height: 41px;
  margin-right: 7px;
  border-radius: 13px;
  background: linear-gradient(to right, #fff 40%, #868686 40%);
  color: #101010;
  font-family: "DejaVu Sans", sans-serif;
  font-size: 34px;
  font-weight: 700;
  line-height: 41px;
  text-align: center;
}
.battery::after {
  content: "";
  position: absolute;
  top: 14px;
  right: -7px;
  width: 4px;
  height: 13px;
  border-radius: 0 5px 5px 0;
  background: #868686;
}
.contact {
  display: flex;
  align-items: center;
  height: 108px;
  padding: 56px 60px 13px 28px;
}
.back {
  display: flex;
  align-items: center;
  gap: 32px;
  width: 157px;
  font-size: 56px;
  font-weight: 500;
}
.avatar__name {
  fill: #33456a;
  font-size: 21px;
  font-weight: 700;
}
.phone {
  flex: 1;
  margin: 0 0 0 31px;
  font-size: 49px;
  font-weight: 700;
  line-height: 56px;
}
.chat {
  position: relative;
  display: flex;
  flex: 1;
  flex-direction: column;
  justify-content: flex-end;
  min-height: 0;
  overflow: hidden;
  background: #090909;
}
.wallpaper {
  position: absolute;
  inset: 0;
  width: 100%;
  height: 100%;
  fill: none;
  stroke: #242424;
  stroke-width: 2.500;
  stroke-linecap: round;
  stroke-linejoin: round;
}
.wallpaper path {
  vector-effect: non-scaling-stroke;
}
.messages {
  position: relative;
  display: flex;
  flex-direction: column;
  padding: 0 50px 23px;
}
.bubble {
  position: relative;
  padding: 16px 30px 18px 29px;
  border-radius: 34px;
}
.bubble + .bubble {
  margin-top: 40px;
}
.bubble.grouped + .bubble {
  margin-top: 14px;
}
.out {
  align-self: flex-end;
  background: #144d34;
  fill: #144d34;
}
.in {
  align-self: flex-start;
  background: #242523;
  fill: #242523;
}
.text {
  font-size: 54px;
  font-weight: 600;
  line-height: 72px;
  white-space: nowrap;
}
.text p {
  width: fit-content;
  margin: 0;
}
.out .text {
  color: #f4fff6;
}
.meta {
  display: flex;
  align-items: center;
  justify-content: flex-end;
  gap: 12px;
  font-size: 40px;
  font-weight: 500;
  font-variant-numeric: tabular-nums;
  line-height: 40px;
  color: #a2a2a2;
}
.out .meta {
  margin-right: -3px;
  color: #9cbfab;
}
.stacked .meta {
  margin-top: 18px;
}
.wrapped .text {
  padding-right: 14px;
}
.wrapped .meta,
.full .meta {
  margin-top: -33px;
}
.short {
  display: flex;
  align-items: flex-end;
  gap: 48px;
  padding-bottom: 26px;
}
.short .meta {
  margin-bottom: -8px;
}
.deleted {
  padding: 4px 28px 18px 24px;
}
.deleted .text {
  display: flex;
  align-items: center;
  gap: 16px;
  font-size: 50px;
  font-style: italic;
  font-weight: 500;
  color: #9cbfab;
}
.deleted .meta {
  margin-top: 16px;
}
.ticks {
  overflow: visible;
  fill: none;
  stroke: #53bdeb;
  stroke-width: 5;
  stroke-linecap: round;
  stroke-linejoin: round;
}
.tail {
  position: absolute;
  right: -18px;
  bottom: 0;
}
.in .tail {
  right: auto;
  left: -18px;
  transform: scaleX(-1);
}
.day {
  align-self: center;
  box-sizing: border-box;
  min-width: 296px;
  margin: 109px 0 43px;
  padding: 0 29px;
  border-radius: 26px;
  background: #171717;
  font-size: 45px;
  font-weight: 800;
  line-height: 61px;
  text-align: center;
}
.scrollbar {
  position: absolute;
  right: 9px;
  bottom: 9px;
  width: 9px;
  height: 392px;
  border-radius: 5px;
  background: #3c3c3c;
}
.composer {
  display: flex;
  align-items: center;
  padding: 22px 50px 123px 40px;
}
.composer button {
  flex: none;
}
.composer svg {
  fill: none;
  stroke: #fff;
  stroke-linecap: round;
  stroke-linejoin: round;
}
.field {
  display: flex;
  flex: 1;
  align-items: center;
  box-sizing: border-box;
  min-width: 0;
  height: 96px;
  margin: 0 55px 0 39px;
  padding: 0 32px 0 36px;
  border: 1px solid #3a3a3a;
  border-radius: 48px;
  background: #262626;
}
.field input {
  flex: 1;
  width: 100%;
  min-width: 0;
  padding: 0;
  border: 0;
  outline: 0;
  background: none;
  color: #fff;
  font: inherit;
  font-size: 54px;
}
.camera {
  margin-right: 55px;
}
</style>
